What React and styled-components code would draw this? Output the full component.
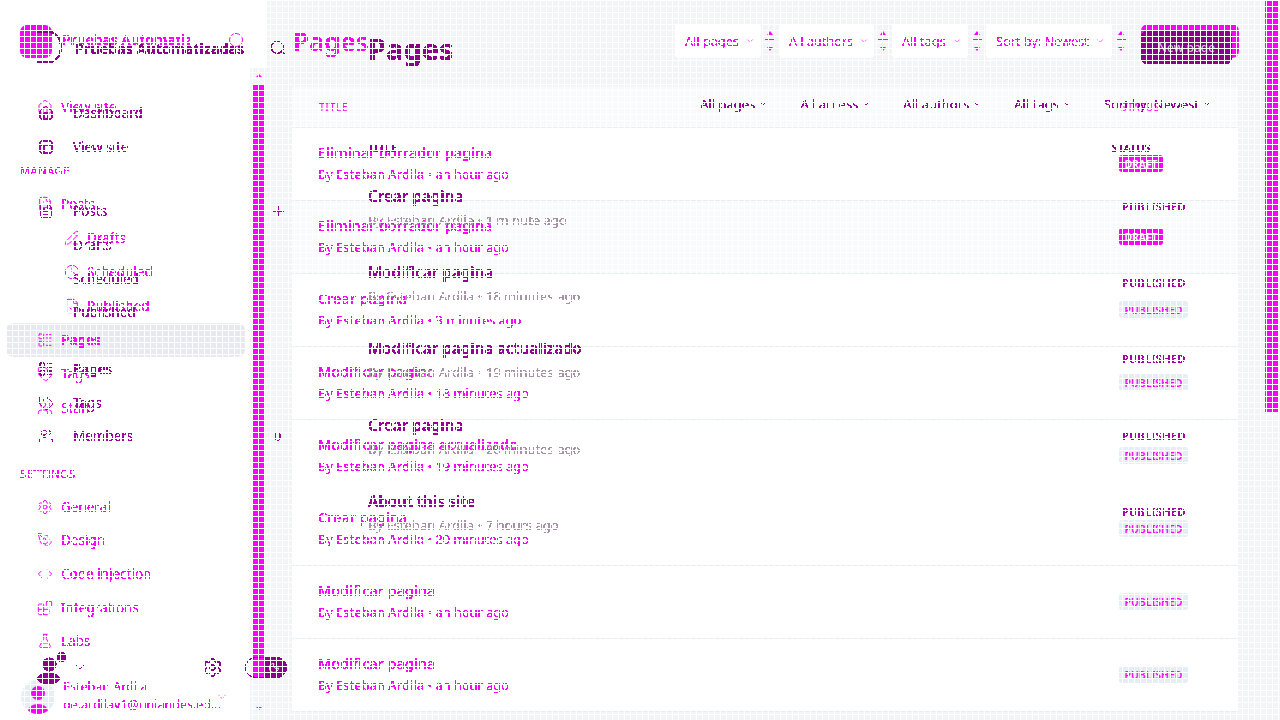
import styled, { createGlobalStyle, css } from "styled-components";
import {
  Blocks, ChevronDown, Clock, Code, FileCheck, FileText, FlaskConical, House, LayoutList,
  Moon, PanelsTopLeft, PencilLine, PenTool, Plus, Search, Settings, Tag, Users,
} from "lucide-react";

const MAGENTA = "#ff00ff";
const PURPLE = "#8b008b";

const GlobalStyle = createGlobalStyle`
  * { box-sizing: border-box; }
  html, body { margin: 0; padding: 0; width: 1280px; height: 720px; overflow: hidden; background: #fff; }
  body { font-family: "Noto Sans", "Open Sans", sans-serif; }
`;

// thresholds the antialiasing away, text in the diff has hard edges
const crisp = css`
  filter: url(#crisp);
`;

const Stage = styled.div`
  position: relative;
  width: 1280px;
  height: 720px;
  overflow: hidden;
  background: #f3f4f7;
`;

const Layer = styled.div`
  position: absolute;
  inset: 0;
  display: flex;
`;

const NewLayer = styled(Layer)`
  color: ${PURPLE};
  ${crisp}
`;

const Mesh = styled.div`
  position: absolute;
  inset: 0;
  pointer-events: none;
  background-image: linear-gradient(#fff 1px, transparent 1px), linear-gradient(90deg, #fff 1px, transparent 1px);
  background-size: 6px 6px;
`;

/* older build, drawn in magenta */
const OldAside = styled.aside`
  flex: none;
  width: 267px;
  height: 720px;
  display: flex;
  flex-direction: column;
  background: linear-gradient(#fff 68px, transparent 68px);
`;

const OldBrand = styled.div`
  height: 68px;
  padding: 25px 0 0 20px;
  display: flex;
  gap: 10px;
  color: ${MAGENTA};
`;

const LogoBlock = styled.div`
  width: 32px;
  height: 33px;
  border-radius: 7px;
  background: ${MAGENTA};
`;

const OldBrandName = styled.div`
  width: 128px;
  height: 20px;
  margin-top: 5px;
  overflow: hidden;
  white-space: nowrap;
  font-size: 14px;
  font-weight: 600;
  ${crisp}
`;

const OldSearchDot = styled.div`
  width: 14px;
  height: 14px;
  margin: 8px 0 0 29px;
  border: 1px solid ${MAGENTA};
  border-radius: 50%;
`;

const OldBody = styled.div`
  flex: 1;
  display: flex;
  min-height: 0;
`;

const OldNav = styled.nav`
  position: relative;
  width: 250px;
  padding-top: 22px;
  background: #fff;
  color: ${MAGENTA};
`;

const NavRow = styled.div`
  height: ${(p) => p.$h || 34}px;
  margin: 0 5px 0 6px;
  padding-left: ${(p) => (p.$sub ? 58 : 31)}px;
  display: flex;
  align-items: center;
  gap: ${(p) => (p.$sub ? 7 : 8)}px;
  border-radius: 7px;
  font-size: 13.5px;
  font-weight: ${(p) => (p.$active ? 700 : 400)};
  background: ${(p) => (p.$active ? "#e6eaf0" : "transparent")};
`;

const RowLabel = styled.span`
  ${crisp}
`;

const SectionLabel = styled.div`
  height: 34px;
  margin-top: ${(p) => p.$gap}px;
  padding-left: 20px;
  display: flex;
  align-items: center;
  font-size: 11px;
  letter-spacing: 0.6px;
  ${crisp}
`;

const UserRow = styled.div`
  position: absolute;
  left: 21px;
  bottom: 5px;
  width: 215px;
  height: 36px;
  display: flex;
  gap: 8px;
  align-items: center;
`;

const UserAvatar = styled.div`
  flex: none;
  position: relative;
  width: 34px;
  height: 34px;
  border-radius: 50%;
  background: #e6eef5;
  overflow: hidden;
`;

const UserHead = styled.div`
  position: absolute;
  left: 10px;
  top: 6px;
  width: 14px;
  height: 14px;
  border-radius: 50%;
  background: ${MAGENTA};
`;

const UserBody = styled.div`
  position: absolute;
  left: 7px;
  top: 24px;
  width: 20px;
  height: 14px;
  border-radius: 50%;
  background: ${MAGENTA};
`;

const UserText = styled.div`
  flex: none;
  width: 158px;
  margin-top: -2px;
  line-height: 18px;
  font-size: 12.5px;
  ${crisp}
`;

const UserMail = styled.div`
  overflow: hidden;
  white-space: nowrap;
  text-overflow: ellipsis;
`;

const UserChevron = styled.div`
  display: flex;
  margin-left: -13px;
`;

const Gutter = styled.div`
  width: 17px;
  padding: 6px 2px 0 3px;
  display: flex;
  flex-direction: column;
  align-items: center;
  gap: 8px;
`;

const ScrollThumb = styled.div`
  flex: none;
  width: 12px;
  height: 592px;
  background: ${MAGENTA};
`;

const ArrowUp = styled.div`
  width: 0;
  height: 0;
  border: 3px solid transparent;
  border-top: 0;
  border-bottom: 3px solid ${MAGENTA};
`;

const ArrowDown = styled(ArrowUp)`
  transform: rotate(180deg);
  margin-top: 22px;
`;

const OldMain = styled.main`
  flex: 1;
  padding: 24px 41px 0 25px;
`;

const OldHeader = styled.header`
  height: 34px;
  display: flex;
  align-items: flex-start;
  color: ${MAGENTA};
`;

const OldTitle = styled.h1`
  margin: 0 0 0 1px;
  line-height: 34px;
  font-size: 26px;
  font-weight: 600;
  ${crisp}
`;

const FilterGroup = styled.div`
  margin-left: auto;
  display: flex;
`;

const SelectBox = styled.div`
  width: ${(p) => p.$w}px;
  height: 34px;
  padding-left: 10px;
  display: flex;
  align-items: center;
  gap: 6px;
  border-radius: 4px;
  background: #fff;
  white-space: nowrap;
  font-size: 12.7px;
`;

const SelectText = styled.span`
  ${crisp}
`;

const Stepper = styled.div`
  width: 18px;
  height: 34px;
  padding-top: 6px;
  display: flex;
  justify-content: center;
`;

const OldAction = styled.div`
  width: 98px;
  height: 34px;
  margin-left: 11px;
  border-radius: 7px;
  background: ${MAGENTA};
`;

const OldCard = styled.section`
  width: 946px;
  margin-top: 29px;
  background: #fff;
  color: ${MAGENTA};
`;

const OldHead = styled.div`
  height: 41px;
  padding: 0 78px 0 27px;
  display: flex;
  align-items: center;
  justify-content: space-between;
  background: #f9fafc;
  border-bottom: 1px solid #e6eef5;
  font-size: 10.5px;
  letter-spacing: 0.5px;
  ${crisp}
`;

const OldRow = styled.div`
  height: 73px;
  padding: 14px 50px 0 26px;
  display: flex;
  justify-content: space-between;
  background: ${(p) => (p.$hover ? "#f9fafc" : "#fff")};
  border-bottom: 1px solid #e6eef5;
`;

const EntryTitle = styled.div`
  line-height: 21px;
  font-size: 14.5px;
  font-weight: 500;
  ${crisp}
`;

const EntryMeta = styled.div`
  margin-top: 1px;
  line-height: 20px;
  font-size: 12.8px;
  ${crisp}
`;

const Author = styled.span`
  font-weight: 500;
`;

const Badge = styled.div`
  width: ${(p) => (p.$draft ? 44 : 69)}px;
  height: 17px;
  margin-top: 13px;
  margin-right: ${(p) => (p.$draft ? 25 : 0)}px;
  display: flex;
  align-items: center;
  justify-content: center;
  border-radius: 3px;
  background: ${(p) => (p.$draft ? MAGENTA : "#e6eef5")};
  color: ${(p) => (p.$draft ? "#fff" : MAGENTA)};
  font-size: 10.5px;
  font-weight: 600;
`;

/* newer build, drawn in dark purple on top */
const NewAside = styled.aside`
  position: relative;
  flex: none;
  width: 290px;
  height: 720px;
  padding: 31px 3px 0 0;
`;

const NewBrand = styled.div`
  height: 32px;
  padding-left: 36px;
  display: flex;
  align-items: center;
  gap: 13px;
`;

const LogoRing = styled.div`
  flex: none;
  width: 26px;
  height: 32px;
  border: 2px solid ${PURPLE};
  border-left: 0;
  border-radius: 0 50% 50% 0;
`;

const NewBrandName = styled.div`
  margin-top: 2px;
  font-size: 14.3px;
  font-weight: 700;
  white-space: nowrap;
`;

const BrandSearch = styled.div`
  margin-left: auto;
  display: flex;
  padding-top: 2px;
`;

const NewList = styled.div`
  margin-top: ${(p) => p.$gap}px;
`;

const NewRow = styled.div`
  height: 33.7px;
  padding-left: 38px;
  display: flex;
  align-items: center;
  font-size: 13.5px;
  color: ${(p) => (p.$strong ? PURPLE : "#a000a0")};
  font-weight: ${(p) => (p.$strong ? 600 : 400)};
`;

const NewLabel = styled.span`
  margin-left: ${(p) => (p.$bare ? 35 : 19)}px;
`;

const NewExtra = styled.span`
  margin-left: auto;
  padding-right: ${(p) => p.$pad}px;
  display: flex;
  font-size: 12px;
`;

const NewFooter = styled.div`
  position: absolute;
  left: 35px;
  right: 3px;
  top: 650px;
  display: flex;
  align-items: center;
  height: 36px;
`;

const FooterChevron = styled.div`
  margin-left: 4px;
  margin-top: -2px;
  display: flex;
`;

const FooterGear = styled.div`
  margin-left: 114px;
  margin-top: -2px;
  display: flex;
`;

const ThemePill = styled.div`
  margin-left: auto;
  margin-top: -1px;
  width: 42px;
  height: 21px;
  padding-right: 6px;
  display: flex;
  align-items: center;
  justify-content: flex-end;
  border: 1.5px solid ${PURPLE};
  border-radius: 11px;
  background: linear-gradient(90deg, transparent 18px, ${PURPLE} 18px);
  color: #fff;
`;

const NewMain = styled.main`
  flex: 1;
  padding: 31px 48px 0 78px;
`;

const NewHeader = styled.header`
  display: flex;
  align-items: center;
  height: 33px;
`;

const NewTitle = styled.h1`
  margin: 0;
  font-size: 29px;
  font-weight: 700;
  line-height: 36px;
  padding-top: 3px;
`;

const NewAction = styled.div`
  width: 91px;
  height: 33px;
  margin-left: auto;
  display: flex;
  align-items: center;
  justify-content: center;
  border-radius: 6px;
  background: ${PURPLE};
  color: #cfc6cf;
  font-size: 12px;
  font-weight: 500;
`;

const NewFilters = styled.div`
  margin-top: 30px;
  margin-right: 20px;
  height: 20px;
  display: flex;
  justify-content: flex-end;
  gap: 32px;
  font-size: 13px;
  color: #9a009a;
`;

const NewFilter = styled.div`
  display: flex;
  align-items: center;
  gap: 3px;
  white-space: nowrap;
`;

const NewHead = styled.div`
  margin-top: 26px;
  height: 16px;
  padding-right: 81px;
  display: flex;
  justify-content: space-between;
  align-items: center;
  font-size: 10.5px;
  font-weight: 600;
  letter-spacing: 0.4px;
`;

const NewEntry = styled.div`
  height: 76.2px;
  padding-top: 30px;
  display: flex;
  justify-content: space-between;
`;

const NewEntryTitle = styled.div`
  line-height: 20px;
  font-size: 15.2px;
  font-weight: 600;
  color: #960096;
`;

const NewEntryMeta = styled.div`
  margin-top: 4px;
  line-height: 20px;
  font-size: 13px;
  color: #a693a6;
`;

const NewStatus = styled.div`
  width: 74px;
  margin-top: 12px;
  margin-right: 36px;
  line-height: 18px;
  font-size: 11px;
  font-weight: 600;
  letter-spacing: 0.3px;
  color: #a800a8;
`;

const FilterDefs = () => (
  <svg width="0" height="0" style={{ position: "absolute" }} aria-hidden="true">
    <filter id="crisp" x="-5%" y="-20%" width="110%" height="140%">
      <feComponentTransfer>
        <feFuncA type="discrete" tableValues="0 1 1" />
      </feComponentTransfer>
    </filter>
  </svg>
);

const StepGlyph = () => (
  <svg width="10" height="22" viewBox="0 0 10 22" fill="none">
    <path d="M5 1 8 5H2Z" fill={MAGENTA} />
    <path d="M0 9.5h10M0 12.5h10" stroke={MAGENTA} />
    <path d="M5 21 2 17h6Z" fill={MAGENTA} />
  </svg>
);

const PeopleGlyph = () => (
  <svg width="33" height="36" viewBox="0 0 33 36" fill={PURPLE}>
    <circle cx="14.5" cy="14.5" r="7" />
    <circle cx="26.5" cy="7" r="4.8" />
    <ellipse cx="13.5" cy="28.5" rx="11.5" ry="5.5" />
  </svg>
);

const oldNavTop = [
  { label: "Posts", icon: FileText },
  { label: "Drafts", icon: PencilLine, sub: true },
  { label: "Scheduled", icon: Clock, sub: true },
  { label: "Published", icon: FileCheck, sub: true },
  { label: "Pages", icon: LayoutList, active: true },
  { label: "Tags", icon: Tag },
  { label: "Staff", icon: Users },
];

const oldNavSettings = [
  { label: "General", icon: Settings },
  { label: "Design", icon: PenTool },
  { label: "Code injection", icon: Code },
  { label: "Integrations", icon: Blocks },
  { label: "Labs", icon: FlaskConical },
];

const oldFilters = [
  { label: "All pages", w: 86 },
  { label: "All authors", w: 95 },
  { label: "All tags", w: 76 },
  { label: "Sort by: Newest", w: 126 },
];

const oldRows = [
  { title: "Eliminar borrador pagina", when: "an hour ago", draft: true },
  { title: "Eliminar borrador pagina", when: "an hour ago", draft: true, hover: true },
  { title: "Crear pagina", when: "3 minutes ago" },
  { title: "Modificar pagina", when: "18 minutes ago" },
  { title: "Modificar pagina actualizado", when: "19 minutes ago" },
  { title: "Crear pagina", when: "20 minutes ago" },
  { title: "Modificar pagina", when: "an hour ago" },
  { title: "Modificar pagina", when: "an hour ago" },
];

const newRows = [
  { title: "Crear pagina", when: "1 minute ago" },
  { title: "Modificar pagina", when: "18 minutes ago" },
  { title: "Modificar pagina actualizado", when: "19 minutes ago" },
  { title: "Crear pagina", when: "20 minutes ago" },
  { title: "About this site", when: "7 hours ago" },
];

const newFilters = ["All pages", "All access", "All authors", "All tags", "Sort by: Newest"];

const OldNavRow = ({ item, h }) => {
  const Icon = item.icon;
  return (
    <NavRow $sub={item.sub} $active={item.active} $h={h}>
      <Icon size={16} strokeWidth={1.5} />
      <RowLabel>{item.label}</RowLabel>
    </NavRow>
  );
};

const NewNavRow = ({ icon: Icon, label, extra, pad, strong }) => (
  <NewRow $strong={strong}>
    {Icon && <Icon size={16} strokeWidth={1.5} />}
    <NewLabel $bare={!Icon}>{label}</NewLabel>
    {extra && <NewExtra $pad={pad}>{extra}</NewExtra>}
  </NewRow>
);

const FilterItem = ({ label, w }) => (
  <>
    <SelectBox $w={w}>
      <SelectText>{label}</SelectText>
      <ChevronDown size={10} strokeWidth={1.5} />
    </SelectBox>
    <Stepper><StepGlyph /></Stepper>
  </>
);

const OldBuild = () => (
  <Layer>
    <OldAside>
      <OldBrand>
        <LogoBlock />
        <OldBrandName>Pruebas Automatizadas</OldBrandName>
        <OldSearchDot />
      </OldBrand>
      <OldBody>
        <OldNav>
          <OldNavRow item={{ label: "View site", icon: House }} />
          <SectionLabel $gap={29}>MANAGE</SectionLabel>
          {oldNavTop.map((item) => <OldNavRow key={item.label} item={item} />)}
          <SectionLabel $gap={31}>SETTINGS</SectionLabel>
          {oldNavSettings.map((item) => <OldNavRow key={item.label} item={item} h={33.6} />)}
          <UserRow>
            <UserAvatar><UserHead /><UserBody /></UserAvatar>
            <UserText>
              <div>Esteban Ardila</div>
              <UserMail>oe.ardilav1@uniandes.edu.co</UserMail>
            </UserText>
            <UserChevron><ChevronDown size={12} strokeWidth={1.5} /></UserChevron>
          </UserRow>
        </OldNav>
        <Gutter>
          <ArrowUp />
          <ScrollThumb />
          <ArrowDown />
        </Gutter>
      </OldBody>
    </OldAside>
    <OldMain>
      <OldHeader>
        <OldTitle>Pages</OldTitle>
        <FilterGroup>
          {oldFilters.map((f) => (
            <FilterItem key={f.label} {...f} />
          ))}
          <OldAction />
        </FilterGroup>
      </OldHeader>
      <OldCard>
        <OldHead>
          <span>TITLE</span>
          <span>STATUS</span>
        </OldHead>
        {oldRows.map((row, i) => (
          <OldRow key={i} $hover={row.hover}>
            <div>
              <EntryTitle>{row.title}</EntryTitle>
              <EntryMeta>By <Author>Esteban Ardila</Author> • {row.when}</EntryMeta>
            </div>
            <Badge $draft={row.draft}>{row.draft ? "DRAFT" : "PUBLISHED"}</Badge>
          </OldRow>
        ))}
      </OldCard>
    </OldMain>
  </Layer>
);

const NewBuild = () => (
  <NewLayer>
    <NewAside>
      <NewBrand>
        <LogoRing />
        <NewBrandName>Pruebas Automatizadas</NewBrandName>
        <BrandSearch><Search size={18} strokeWidth={1.5} /></BrandSearch>
      </NewBrand>
      <NewList $gap={33}>
        <NewNavRow icon={House} label="Dashboard" />
        <NewNavRow icon={PanelsTopLeft} label="View site" />
      </NewList>
      <NewList $gap={31}>
        <NewNavRow icon={FileText} label="Posts" extra={<Plus size={17} strokeWidth={1.5} />} pad={0} />
        <NewNavRow label="Drafts" />
        <NewNavRow label="Scheduled" />
        <NewNavRow label="Published" />
      </NewList>
      <NewList $gap={23}>
        <NewNavRow icon={LayoutList} label="Pages" strong />
        <NewNavRow icon={Tag} label="Tags" />
        <NewNavRow icon={Users} label="Members" extra="0" pad={6} />
      </NewList>
      <NewFooter>
        <PeopleGlyph />
        <FooterChevron><ChevronDown size={16} strokeWidth={1.5} /></FooterChevron>
        <FooterGear><Settings size={21} strokeWidth={1.5} /></FooterGear>
        <ThemePill><Moon size={12} strokeWidth={2} /></ThemePill>
      </NewFooter>
    </NewAside>
    <NewMain>
      <NewHeader>
        <NewTitle>Pages</NewTitle>
        <NewAction>New page</NewAction>
      </NewHeader>
      <NewFilters>
        {newFilters.map((label) => (
          <NewFilter key={label}>{label}<ChevronDown size={10} strokeWidth={2} /></NewFilter>
        ))}
      </NewFilters>
      <NewHead>
        <span>TITLE</span>
        <span>STATUS</span>
      </NewHead>
      {newRows.map((row, i) => (
        <NewEntry key={i}>
          <div>
            <NewEntryTitle>{row.title}</NewEntryTitle>
            <NewEntryMeta>By Esteban Ardila • {row.when}</NewEntryMeta>
          </div>
          <NewStatus>PUBLISHED</NewStatus>
        </NewEntry>
      ))}
    </NewMain>
  </NewLayer>
);

const PageScroll = styled.div`
  position: absolute;
  top: 0;
  right: 1px;
  width: 14px;
  height: 412px;
  background: ${MAGENTA};
`;

const App = () => (
  <Stage>
    <GlobalStyle />
    <FilterDefs />
    <OldBuild />
    <PageScroll />
    <NewBuild />
    <Mesh />
  </Stage>
);

export default App;
